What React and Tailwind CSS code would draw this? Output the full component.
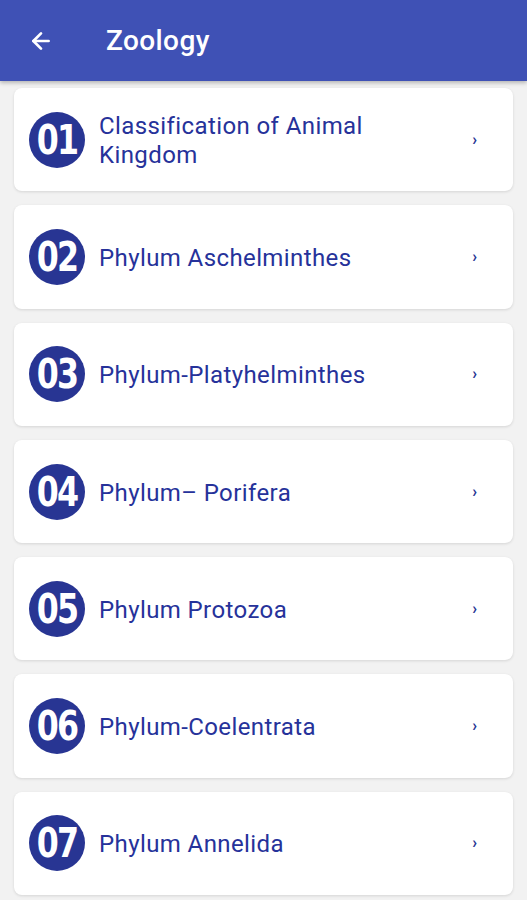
import { ArrowLeft } from 'lucide-react';

const topics = [
  { n: '01', title: 'Classification of Animal Kingdom' },
  { n: '02', title: 'Phylum Aschelminthes' },
  { n: '03', title: 'Phylum-Platyhelminthes' },
  { n: '04', title: 'Phylum– Porifera' },
  { n: '05', title: 'Phylum Protozoa' },
  { n: '06', title: 'Phylum-Coelentrata' },
  { n: '07', title: 'Phylum Annelida' },
];

export default function App() {
  return (
    <div className="w-[527px] h-[900px] overflow-hidden bg-[#f2f2f2] font-['Roboto',sans-serif]">
      {/* App bar */}
      <header className="h-[81px] bg-[#3f51b5] flex items-center shadow-[0_2px_4px_rgba(0,0,0,0.25)] relative z-10">
        <div className="w-[82px] pl-[28px] flex items-center">
          <ArrowLeft className="w-[26px] h-[26px] text-white" strokeWidth={2.5} />
        </div>
        <h1 className="text-white text-[28px] font-medium ml-[24px] tracking-[0.4px]">Zoology</h1>
      </header>

      {/* Topic list */}
      <div className="flex flex-col gap-[14px] px-[14px] pt-[7px]">
        {topics.map((t) => (
          <div
            key={t.n}
            className="h-[103.3px] bg-white rounded-[8px] shadow-[0_1px_3px_rgba(0,0,0,0.12)] flex items-center pl-[15px] pr-[36px]"
          >
            <div className="w-[56px] h-[56px] rounded-full bg-[#283593] flex items-center justify-center shrink-0">
              <span className="text-white text-[40px] font-bold leading-none tracking-[-2px] scale-x-[0.88] font-['DejaVu_Sans_Condensed',sans-serif]">
                {t.n}
              </span>
            </div>
            <p className="flex-1 ml-[14px] pt-[3px] text-[#26329a] text-[24px] leading-[29px] tracking-[0.4px] pr-[40px]">{t.title}</p>
            <span className="text-[#283593] text-[16px] font-bold">›</span>
          </div>
        ))}
      </div>
    </div>
  );
}
